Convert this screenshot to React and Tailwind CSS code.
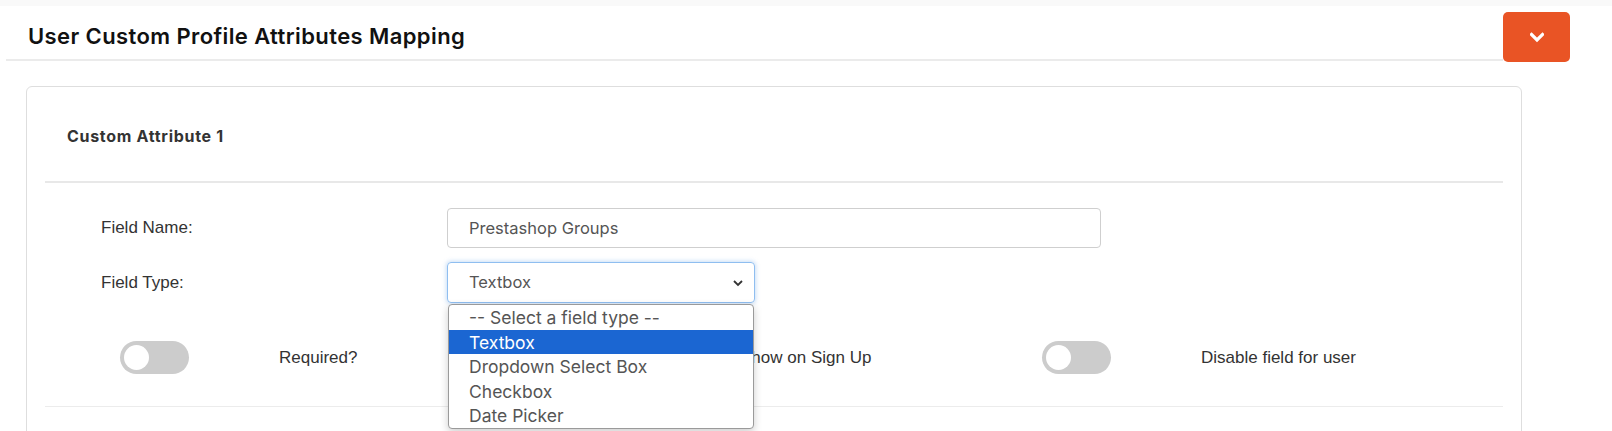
import React from "react";

function Toggle() {
  return (
    <div className="relative w-[69px] h-[33px] rounded-full bg-[#cccccc] shrink-0">
      <div className="absolute left-[4px] top-[4px] w-[25px] h-[25px] rounded-full bg-white" />
    </div>
  );
}

function ToggleItem({ label }) {
  return (
    <div className="flex items-center w-[461px] shrink-0">
      <Toggle />
      <span className="ml-[90px] text-[17px] text-[#333] font-['Liberation_Sans',sans-serif]">{label}</span>
    </div>
  );
}

export default function App() {
  const options = ["-- Select a field type --", "Textbox", "Dropdown Select Box", "Checkbox", "Date Picker"];
  return (
    <div className="w-[1612px] h-[431px] overflow-hidden bg-white font-['Inter',sans-serif]">
      <div className="h-[6px] bg-[#f9f9f9]" />
      <div className="flex">
        <div className="ml-[6px] flex-1 h-[55px] border-b-2 border-[#ebebeb] pl-[22px] pt-[17px]">
          <h1 className="text-[22px] leading-[26px] font-semibold text-[#111] tracking-[0.4px]">
            User Custom Profile Attributes Mapping
          </h1>
        </div>
        <button className="mt-[6px] mr-[42px] w-[67px] h-[50px] rounded-[5px] bg-[#e95425] flex items-center justify-center">
          <svg width="14" height="12" viewBox="0 0 14 12">
            <path d="M1.5 3.5 L7 9 L12.5 3.5" stroke="white" strokeWidth="3.2" fill="none" strokeLinecap="square" />
          </svg>
        </button>
      </div>

      <div className="mt-[24px] ml-[26px] w-[1496px] border border-[#dedede] rounded-[6px] px-[18px]">
        <div className="h-[96px] border-b-2 border-[#e8e8e8] pl-[22px] pt-[39px]">
          <div className="text-[16px] leading-[20px] font-bold text-[#333] tracking-[0.7px]">Custom Attribute 1</div>
        </div>

        <div className="pt-[25px]">
          <div className="flex items-center">
            <div className="w-[402px] pl-[56px] text-[17px] text-[#333] font-['Liberation_Sans',sans-serif]">Field Name:</div>
            <div className="w-[654px] h-[40px] border border-[#cfcfcf] rounded-[4px] flex items-center pl-[21px] text-[16.5px] text-[#555]">
              Prestashop Groups
            </div>
          </div>

          <div className="flex items-center mt-[14px]">
            <div className="w-[402px] pl-[56px] text-[17px] text-[#333] font-['Liberation_Sans',sans-serif]">Field Type:</div>
            <div className="relative">
              <div className="w-[308px] h-[41px] border border-[#8fbef0] rounded-[4px] shadow-[0_0_4px_1px_rgba(100,160,230,0.35)] flex items-center justify-between pl-[21px] pr-[10px] text-[16.5px] text-[#555]">
                <span>Textbox</span>
                <svg width="12" height="8" viewBox="0 0 12 8">
                  <path d="M2 2 L6 6 L10 2" stroke="#333" strokeWidth="1.8" fill="none" />
                </svg>
              </div>
              <div className="absolute z-10 left-[1px] top-[42px] w-[306px] bg-white border border-[#9a9a9a] rounded-[4px] shadow-[0_3px_8px_rgba(0,0,0,0.2)] text-[17.5px]">
                {options.map((o, i) => (
                  <div
                    key={o}
                    className={
                      "h-[24.5px] leading-[25px] pl-[20px] " +
                      (i === 1 ? "bg-[#1b66d2] text-white" : "text-[#555]")
                    }
                  >
                    {o}
                  </div>
                ))}
              </div>
            </div>
          </div>

          <div className="flex items-center pl-[75px] mt-[38px] h-[33px]">
            <ToggleItem label="Required?" />
            <ToggleItem label="Show on Sign Up" />
            <ToggleItem label="Disable field for user" />
          </div>
          <div className="mt-[32px] border-b border-[#ececec]" />
          <div className="h-[40px]" />
        </div>
      </div>
    </div>
  );
}
